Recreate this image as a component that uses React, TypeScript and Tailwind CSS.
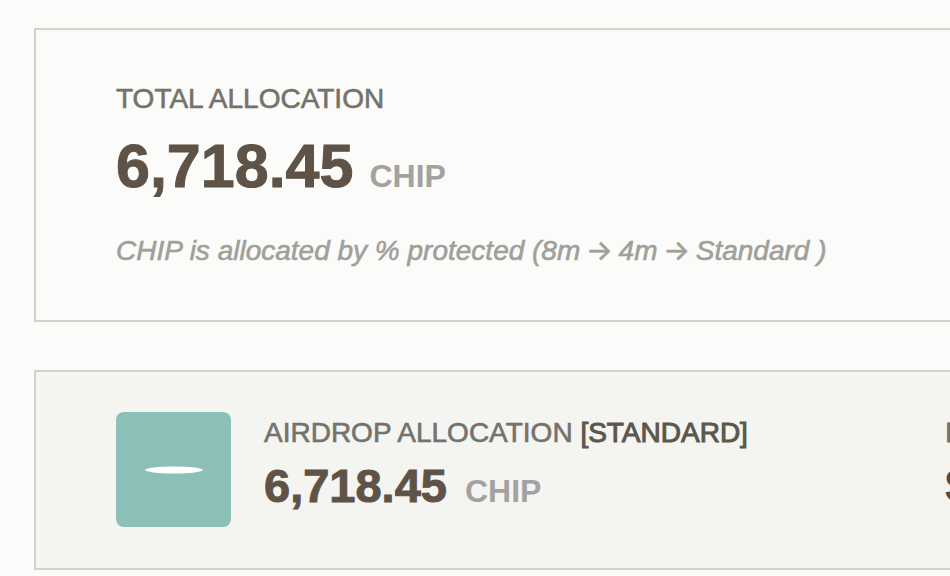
type AmountProps = {
  value: string;
  size: "large" | "medium";
};

function Amount({ value, size }: AmountProps) {
  const large = size === "large";
  const rowStyle = large ? "gap-4" : "gap-[18px]";
  const valueStyle = large
    ? "text-[61px] leading-16 [-webkit-text-stroke:1px]"
    : "text-[47px] leading-16 [-webkit-text-stroke:1px]";
  return (
    <p className={`${rowStyle} flex items-baseline font-bold whitespace-nowrap`}>
      <span className={`${valueStyle} text-[#5f5347]`}>{value}</span>
      <span className="text-[32px] leading-10 text-[#a3a2a0]">CHIP</span>
    </p>
  );
}

function Arrow() {
  return (
    <span className="-mx-0.5 font-['Inter'] text-[28px] leading-none not-italic">→</span>
  );
}

function StandardBadge() {
  return (
    <div className="flex size-[115px] shrink-0 items-center justify-center rounded-lg bg-[#8cbfb8]">
      <svg width="58" height="8" viewBox="0 0 58 8" aria-hidden="true">
        <ellipse cx="29" cy="4" rx="29" ry="3.5" fill="#fff" />
      </svg>
    </div>
  );
}

export default function App() {
  return (
    <main className="flex min-h-screen flex-col gap-12 overflow-hidden bg-[#fbfbf9] pt-7 pb-1.5 pl-[34px] font-['Liberation_Sans',Arial,sans-serif] text-[28px] leading-[42px] text-[#74726c]">
      <section className="border-2 border-r-0 border-[#d2d2cf] px-20 py-12">
        <h2 className="[-webkit-text-stroke:0.6px]">TOTAL ALLOCATION</h2>
        <div className="pt-3.5 pb-8">
          <Amount value="6,718.45" size="large" />
        </div>
        <p className="whitespace-nowrap text-[#a09f9a] italic [-webkit-text-stroke:0.6px]">
          CHIP is allocated by % protected (8m <Arrow /> 4m <Arrow /> Standard )
        </p>
      </section>

      <section className="flex border-2 border-r-0 border-[#d2d2cf] bg-[#f4f4f1] pt-10 pb-[41px] pl-20">
        <div className="flex min-w-0 grow gap-[33px]">
          <StandardBadge />
          <div>
            <h2 className="whitespace-nowrap [-webkit-text-stroke:0.6px]">
              AIRDROP ALLOCATION{" "}
              <span className="text-[#5c564b] [-webkit-text-stroke:1px]">[STANDARD]</span>
            </h2>
            <Amount value="6,718.45" size="medium" />
          </div>
        </div>
        <div className="w-[5px] shrink-0 overflow-hidden">
          <p className="[-webkit-text-stroke:1px]">I</p>
          <p className="text-[47px] leading-16 font-bold text-[#4f4a42]">$</p>
        </div>
      </section>
    </main>
  );
}
